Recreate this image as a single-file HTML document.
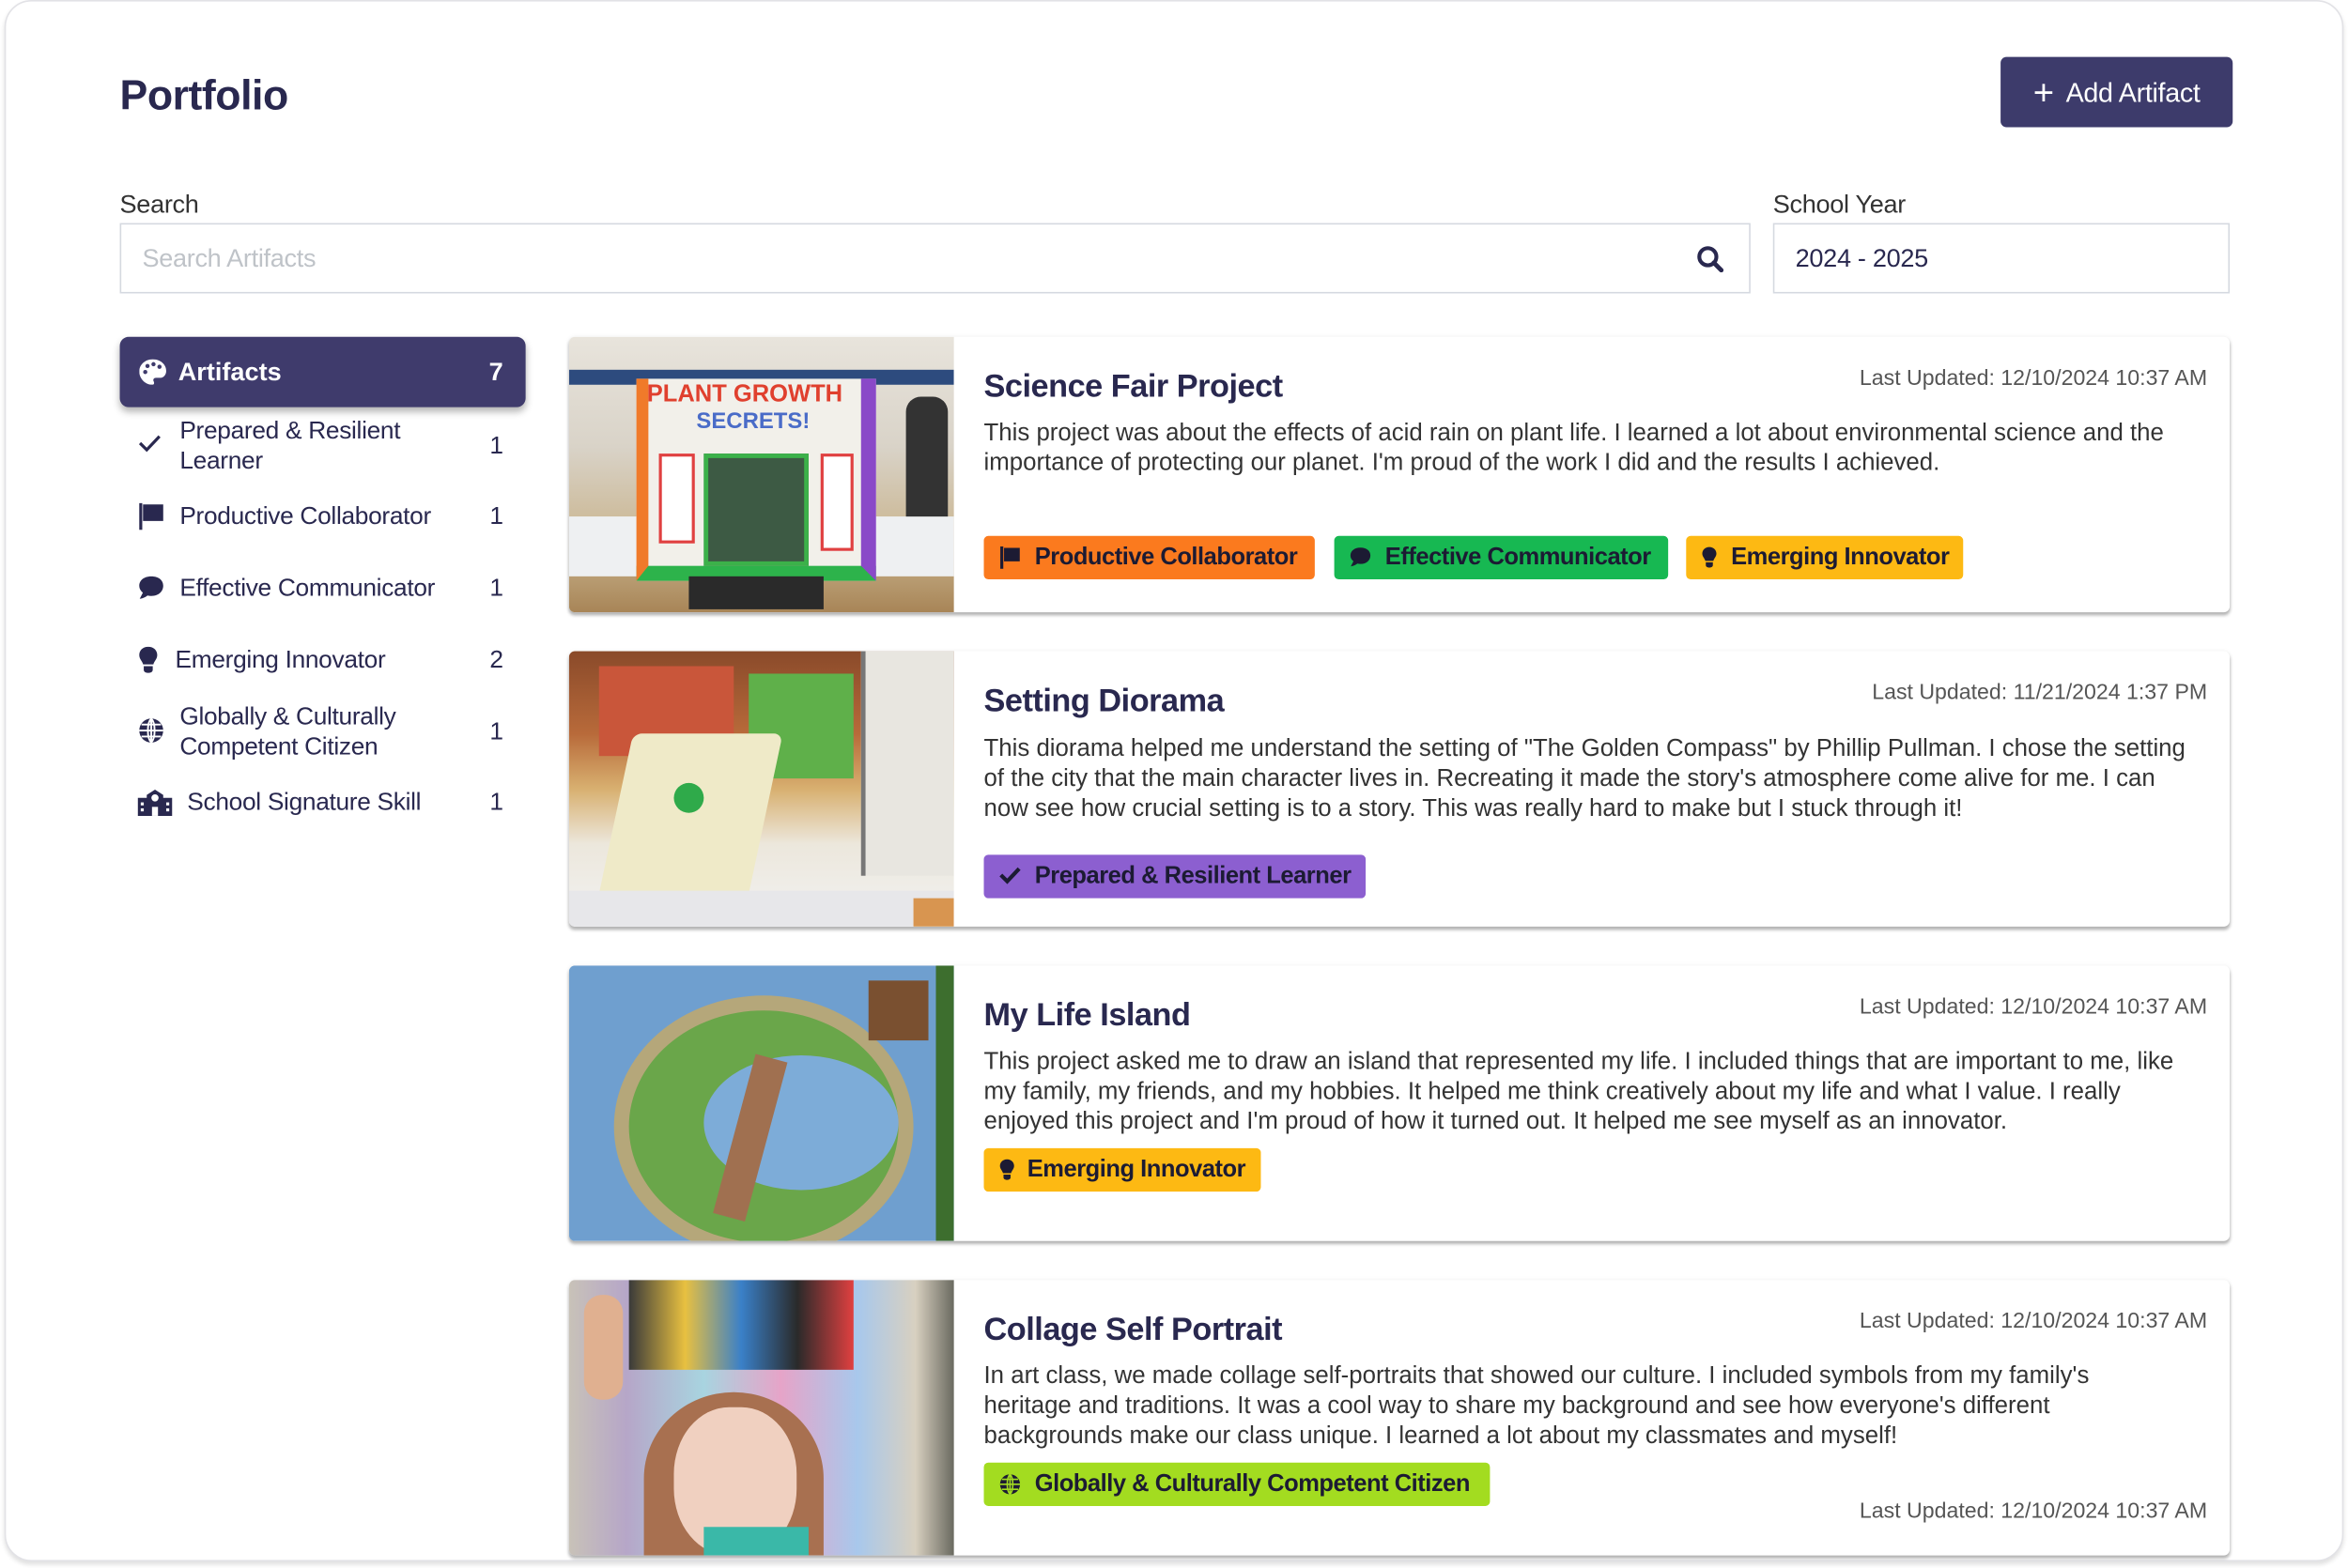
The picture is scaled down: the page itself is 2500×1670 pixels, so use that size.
<!DOCTYPE html>
<html><head><meta charset="utf-8">
<style>
*{box-sizing:border-box;margin:0;padding:0}
html,body{width:2500px;height:1670px;overflow:hidden;background:#fff;font-family:"Liberation Sans",sans-serif}
#w{position:absolute;left:0;top:0;width:1568px;height:1047px;transform:scale(1.59439);transform-origin:0 0}
.frame{position:absolute;left:3px;top:0;width:1562px;height:1043px;border:1px solid #e2e2e6;border-radius:18px;background:#fff;box-shadow:0 2px 3px rgba(0,0,0,.12)}
.a{position:absolute}
h1{position:absolute;left:80px;top:48px;font-size:28px;font-weight:bold;color:#29284f;letter-spacing:-.3px}
.btn{left:1336px;top:38px;width:155px;height:47px;background:#3d3b6b;border-radius:4px;color:#fff;font-size:18px;line-height:49px;text-align:center;letter-spacing:-.2px}
.lbl{font-size:17px;color:#333;letter-spacing:-.2px}
.inp{border:1.5px solid #d5d9e0;height:47px;font-size:17px;line-height:46px;padding-left:14px;letter-spacing:-.2px}
.side{left:80px;top:225px;width:271px;height:47px;background:#3f3b6c;border-radius:6px;box-shadow:0 3px 5px rgba(0,0,0,.3);color:#fff;font-weight:bold;font-size:17px;line-height:48px}
.it{position:absolute;left:92px;width:250px;font-size:16.5px;color:#29284f;line-height:20px;letter-spacing:-.2px}
.it .c{position:absolute;right:6px;top:0}
.it svg{position:absolute;left:0}
.card{position:absolute;left:380px;width:1109px;height:184px;background:#fff;border-radius:4px;box-shadow:0 2px 2px rgba(0,0,0,.28),0 0 3px rgba(0,0,0,.06);overflow:hidden}
.img{position:absolute;left:0;top:0;width:257px;height:100%;overflow:hidden}
.t{position:absolute;left:277px;top:21px;font-size:21.5px;font-weight:bold;color:#29284f;letter-spacing:-.3px}
.d{position:absolute;right:15px;top:20px;font-size:14.5px;color:#555;letter-spacing:0}
.p{position:absolute;left:277px;top:54px;width:820px;font-size:16.2px;line-height:20px;color:#333;letter-spacing:0}
.tag{position:absolute;height:29px;border-radius:3px;font-size:16px;font-weight:bold;color:#1c1b33;line-height:30px;padding-left:34px;letter-spacing:-.3px}
.tag svg{position:absolute;left:10px;top:7px}
</style></head><body><div id="w">
<div class="frame"></div>
<h1>Portfolio</h1>
<div class="a btn"><span style="font-size:24px;vertical-align:-2px;margin-right:8px">+</span>Add Artifact</div>
<div class="a lbl" style="left:80px;top:127px">Search</div>
<div class="a inp" style="left:80px;top:149px;width:1089px;color:#bfc3c8">Search Artifacts
<svg class="a" style="left:1052px;top:14px" width="18" height="18" viewBox="0 0 18 18"><circle cx="7.5" cy="7.5" r="5.7" fill="none" stroke="#29284f" stroke-width="2.6"/><path d="M11.5 11.5l5 5" stroke="#29284f" stroke-width="3" stroke-linecap="round"/></svg></div>
<div class="a lbl" style="left:1184px;top:127px">School Year</div>
<div class="a inp" style="left:1184px;top:149px;width:305px;color:#29284f">2024 - 2025</div>

<div class="a side"><svg class="a" style="left:13px;top:15px" width="18" height="17" viewBox="0 0 18 17"><path d="M9 0C4 0 0 3.6 0 8.2 0 12.8 4 17 8.6 17c1.4 0 1.6-1.2 1-2.3-.6-1.2.2-2.3 1.6-2.3h2.6C16 12.4 18 10.6 18 7.8 18 3.4 14 0 9 0z" fill="#fff"/><circle cx="4" cy="8.5" r="1.4" fill="#3f3b6c"/><circle cx="5.5" cy="4.5" r="1.4" fill="#3f3b6c"/><circle cx="9.5" cy="3.3" r="1.4" fill="#3f3b6c"/><circle cx="13.5" cy="5" r="1.4" fill="#3f3b6c"/></svg><span style="position:absolute;left:39px">Artifacts</span><span style="position:absolute;right:15px">7</span></div>

<div class="it" style="top:278px;padding-left:28px"><svg style="top:12px" width="16" height="12" viewBox="0 0 16 12"><path d="M1.5 6l4.5 4.5L14.5 1.5" fill="none" stroke="#29284f" stroke-width="2"/></svg>Prepared &amp; Resilient<br>Learner<span class="c" style="top:10px">1</span></div>
<div class="it" style="top:335px;padding-left:28px"><svg style="top:1px" width="18" height="18" viewBox="0 0 18 18"><path d="M1 0h2v18H1z" fill="#29284f"/><path d="M3.5 1h13.5v11H3.5z" fill="#29284f"/></svg>Productive Collaborator<span class="c">1</span></div>
<div class="it" style="top:383px;padding-left:28px"><svg style="top:1px" width="18" height="18" viewBox="0 0 18 18"><path d="M9 1C4 1 1 3.8 1 7.3c0 1.9 1 3.5 2.4 4.6L1.3 16c2.5-.3 4.4-1.5 5.2-2.2.8.2 1.6.3 2.5.3 5 0 8-3.1 8-6.8S14 1 9 1z" fill="#29284f"/></svg>Effective Communicator<span class="c">1</span></div>
<div class="it" style="top:431px;padding-left:25px"><svg style="top:1px" width="14" height="18" viewBox="0 0 14 18"><path d="M7 0C3.3 0 1 2.6 1 5.6c0 2.5 2 4 2.6 6.2h6.8C11 9.6 13 8.1 13 5.6 13 2.6 10.7 0 7 0z" fill="#29284f"/><path d="M4 13h6v2.5c0 1-1 2-3 2s-3-1-3-2z" fill="#29284f"/></svg>Emerging Innovator<span class="c">2</span></div>
<div class="it" style="top:469px;padding-left:28px"><svg style="top:10px" width="18" height="18" viewBox="0 0 18 18"><circle cx="9" cy="9" r="8" fill="#29284f"/><path d="M1 9h16M9 1v16M2.5 5h13M2.5 13h13M9 1c-3 3-3 13 0 16M9 1c3 3 3 13 0 16" stroke="#fff" stroke-width="1.2" fill="none"/></svg>Globally &amp; Culturally<br>Competent Citizen<span class="c" style="top:10px">1</span></div>
<div class="it" style="top:526px;padding-left:33px"><svg style="top:1px" width="23" height="18" viewBox="0 0 23 18"><path d="M0 6h6V4l5.5-3.5L17 4v2h6v12H0z" fill="#29284f"/><circle cx="11.5" cy="6" r="2.4" fill="#fff"/><rect x="9.5" y="12" width="4" height="6" fill="#fff"/><rect x="2" y="9" width="2" height="2" fill="#fff"/><rect x="2" y="13" width="2" height="2" fill="#fff"/><rect x="19" y="9" width="2" height="2" fill="#fff"/><rect x="19" y="13" width="2" height="2" fill="#fff"/></svg>School Signature Skill<span class="c">1</span></div>

<!-- card 1 -->
<div class="card" style="top:225px">
<div class="img" style="background:linear-gradient(180deg,#e8e4dc 0,#d9d3c8 40%,#c9b48e 75%,#a88557 100%)">
<div class="a" style="left:0;top:22px;width:257px;height:10px;background:#2d4b7e"></div>
<div class="a" style="left:0;top:120px;width:257px;height:40px;background:#eef0f2"></div>
<div class="a" style="left:45px;top:28px;width:160px;height:135px;background:#f2f0ea;border-left:8px solid #f07a2a;border-right:10px solid #8a49c8;border-bottom:10px solid #2db34b"></div>
<div class="a" style="left:52px;top:30px;font:bold 16px 'Liberation Sans';color:#e0402e">PLANT GROWTH</div>
<div class="a" style="left:85px;top:48px;font:bold 15px 'Liberation Sans';color:#4a6cc8">SECRETS!</div>
<div class="a" style="left:90px;top:78px;width:70px;height:75px;background:#3d5a44;border:3px solid #3cb14a"></div>
<div class="a" style="left:60px;top:78px;width:24px;height:60px;border:2px solid #e04040;background:#fff"></div>
<div class="a" style="left:168px;top:78px;width:22px;height:65px;border:2px solid #e04040;background:#fff"></div>
<div class="a" style="left:80px;top:160px;width:90px;height:22px;background:#2a2a2a"></div>
<div class="a" style="left:225px;top:40px;width:28px;height:80px;background:#333;border-radius:10px 10px 0 0"></div>
</div>
<div class="t">Science Fair Project</div>
<div class="d">Last Updated: 12/10/2024 10:37 AM</div>
<div class="p">This project was about the effects of acid rain on plant life. I learned a lot about environmental science and the importance of protecting our planet. I'm proud of the work I did and the results I achieved.</div>
<div class="tag" style="left:277px;top:133px;width:221px;background:#fb7a1e"><svg width="15" height="15" viewBox="0 0 15 15"><path d="M1 0h2v15H1zM3.5 1H14v9H3.5z" fill="#1c1b33"/></svg>Productive Collaborator</div>
<div class="tag" style="left:511px;top:133px;width:223px;background:#17b852"><svg width="15" height="15" viewBox="0 0 18 18"><path d="M9 1C4 1 1 3.8 1 7.3c0 1.9 1 3.5 2.4 4.6L1.3 16c2.5-.3 4.4-1.5 5.2-2.2.8.2 1.6.3 2.5.3 5 0 8-3.1 8-6.8S14 1 9 1z" fill="#1c1b33"/></svg>Effective Communicator</div>
<div class="tag" style="left:746px;top:133px;width:185px;background:#fdb913;padding-left:30px"><svg width="11" height="15" viewBox="0 0 14 18"><path d="M7 0C3.3 0 1 2.6 1 5.6c0 2.5 2 4 2.6 6.2h6.8C11 9.6 13 8.1 13 5.6 13 2.6 10.7 0 7 0zM4 13h6v2.5c0 1-1 2-3 2s-3-1-3-2z" fill="#1c1b33"/></svg>Emerging Innovator</div>
</div>

<!-- card 2 -->
<div class="card" style="top:435px">
<div class="img" style="background:linear-gradient(180deg,#8a4a2a 0,#b86a3a 30%,#d8b070 50%,#ece7dc 70%,#f2f2f2 100%)">
<div class="a" style="left:20px;top:10px;width:90px;height:60px;background:#c9563a"></div>
<div class="a" style="left:120px;top:15px;width:70px;height:70px;background:#5fb04a"></div>
<div class="a" style="left:195px;top:0;width:62px;height:150px;background:#e8e6e0;border-left:3px solid #777"></div>
<div class="a" style="left:30px;top:55px;width:100px;height:120px;background:#efeac8;transform:skewX(-12deg);border-radius:6px"></div>
<div class="a" style="left:70px;top:88px;width:20px;height:20px;border-radius:50%;background:#2faa4a"></div>
<div class="a" style="left:0;top:160px;width:257px;height:24px;background:#e7e7ea"></div>
<div class="a" style="left:230px;top:165px;width:27px;height:19px;background:#d89550"></div>
</div>
<div class="t">Setting Diorama</div>
<div class="d">Last Updated: 11/21/2024 1:37 PM</div>
<div class="p" style="top:55px;width:808px">This diorama helped me understand the setting of "The Golden Compass" by Phillip Pullman. I chose the setting of the city that the main character lives in. Recreating it made the story's atmosphere come alive for me. I can now see how crucial setting is to a story. This was really hard to make but I stuck through it!</div>
<div class="tag" style="left:277px;top:136px;width:255px;background:#8c5fd0"><svg width="15" height="13" viewBox="0 0 16 12"><path d="M1.5 6l4.5 4.5L14.5 1.5" fill="none" stroke="#1c1b33" stroke-width="2.8"/></svg>Prepared &amp; Resilient Learner</div>
</div>

<!-- card 3 -->
<div class="card" style="top:645px">
<div class="img" style="background:#6f9fcf">
<div class="a" style="left:30px;top:20px;width:200px;height:175px;border-radius:50%;background:#6aa64a;border:10px solid #b5a77a"></div>
<div class="a" style="left:90px;top:60px;width:130px;height:90px;border-radius:50%;background:#7dacd8"></div>
<div class="a" style="left:110px;top:60px;width:22px;height:110px;background:#a07050;transform:rotate(15deg)"></div>
<div class="a" style="left:200px;top:10px;width:40px;height:40px;background:#7a5030"></div>
<div class="a" style="left:245px;top:0;width:12px;height:184px;background:#3d6e2e"></div>
</div>
<div class="t">My Life Island</div>
<div class="d">Last Updated: 12/10/2024 10:37 AM</div>
<div class="p">This project asked me to draw an island that represented my life. I included things that are important to me, like my family, my friends, and my hobbies. It helped me think creatively about my life and what I value. I really enjoyed this project and I'm proud of how it turned out. It helped me see myself as an innovator.</div>
<div class="tag" style="left:277px;top:122px;width:185px;background:#fdb913;padding-left:29px"><svg width="11" height="15" viewBox="0 0 14 18"><path d="M7 0C3.3 0 1 2.6 1 5.6c0 2.5 2 4 2.6 6.2h6.8C11 9.6 13 8.1 13 5.6 13 2.6 10.7 0 7 0zM4 13h6v2.5c0 1-1 2-3 2s-3-1-3-2z" fill="#1c1b33"/></svg>Emerging Innovator</div>
</div>

<!-- card 4 -->
<div class="card" style="top:855px">
<div class="img" style="background:linear-gradient(90deg,#c8c2b8 0,#b6a6c8 15%,#a8d4e0 35%,#e6a4c8 55%,#a8c8ec 75%,#d8d0c0 90%,#6a6a60 100%)">
<div class="a" style="left:40px;top:0;width:150px;height:60px;background:linear-gradient(90deg,#3a3a3a,#e8c040,#3a80c8,#2a2a2a,#e04040)"></div>
<div class="a" style="left:50px;top:75px;width:120px;height:115px;background:#a87050;border-radius:50% 50% 0 0"></div>
<div class="a" style="left:70px;top:85px;width:82px;height:99px;background:#f0d0c0;border-radius:45%"></div>
<div class="a" style="left:90px;top:165px;width:70px;height:19px;background:#3ab8a8"></div>
<div class="a" style="left:10px;top:10px;width:26px;height:70px;background:#e0b090;border-radius:12px"></div>
</div>
<div class="t">Collage Self Portrait</div>
<div class="d">Last Updated: 12/10/2024 10:37 AM</div>
<div class="p" style="width:770px">In art class, we made collage self-portraits that showed our culture. I included symbols from my family's heritage and traditions. It was a cool way to share my background and see how everyone's different backgrounds make our class unique. I learned a lot about my classmates and myself!</div>
<div class="tag" style="left:277px;top:122px;width:338px;background:#a3dc20"><svg width="15" height="15" viewBox="0 0 18 18"><circle cx="9" cy="9" r="8" fill="#1c1b33"/><path d="M1 9h16M9 1v16M2.5 5h13M2.5 13h13M9 1c-3 3-3 13 0 16M9 1c3 3 3 13 0 16" stroke="#a3dc20" stroke-width="1.2" fill="none"/></svg>Globally &amp; Culturally Competent Citizen</div>
<div class="d" style="top:147px">Last Updated: 12/10/2024 10:37 AM</div>
</div>
</div></body></html>
